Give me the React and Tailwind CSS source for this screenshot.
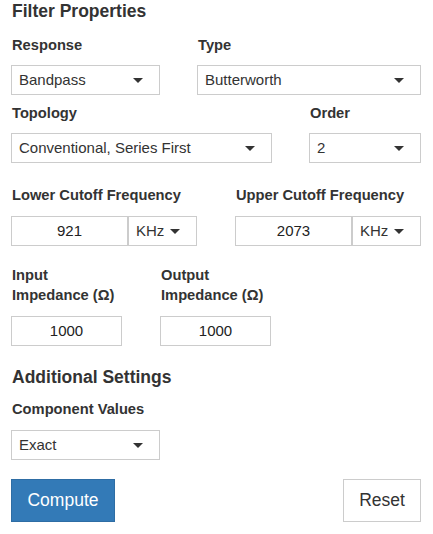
import React from "react";

const font = { fontFamily: '"Liberation Sans", Arial, Helvetica, sans-serif' };

function Caret() {
  return (
    <span className="inline-block w-0 h-0 border-l-[5px] border-r-[5px] border-t-[5px] border-l-transparent border-r-transparent border-t-[#333]" />
  );
}

function Select({ value, className }) {
  return (
    <div
      className={
        "h-[30px] border border-[#ccc] bg-white flex items-center justify-between pl-[7px] pr-[16px] text-[15px] text-[#333] " +
        className
      }
    >
      <span>{value}</span>
      <Caret />
    </div>
  );
}

function Label({ children, className = "" }) {
  return (
    <div className={"text-[14.7px] leading-[20px] font-bold text-[#333] " + className}>
      {children}
    </div>
  );
}

function FreqInput({ value }) {
  return (
    <div className="flex h-[30px]">
      <div className="w-[117px] h-full border border-[#ccc] flex items-center justify-center text-[15px] text-[#222]">
        {value}
      </div>
      <div className="w-[69px] h-full border border-[#ccc] flex items-center justify-between pl-[7px] pr-[16px] text-[15px] text-[#333]">
        <span>KHz</span>
        <Caret />
      </div>
    </div>
  );
}

function NumInput({ value }) {
  return (
    <div className="w-[111px] h-[30px] border border-[#ccc] flex items-center justify-center text-[15px] text-[#222]">
      {value}
    </div>
  );
}

export default function App() {
  return (
    <div className="w-[433px] h-[534px] bg-white pl-[11px] pr-[12px] overflow-hidden" style={font}>
      <div className="text-[17.5px] leading-[22px] font-bold text-[#333] pl-[1px]">Filter Properties</div>

      <div className="flex mt-[13px]">
        <div className="w-[149px]">
          <Label className="pl-[1px]">Response</Label>
          <Select value="Bandpass" className="mt-[10px]" />
        </div>
        <div className="w-[224px] ml-[37px]">
          <Label className="pl-[1px]">Type</Label>
          <Select value="Butterworth" className="mt-[10px]" />
        </div>
      </div>

      <div className="flex mt-[8px]">
        <div className="w-[261px]">
          <Label className="pl-[1px]">Topology</Label>
          <Select value="Conventional, Series First" className="mt-[10px]" />
        </div>
        <div className="w-[112px] ml-[37px]">
          <Label className="pl-[1px]">Order</Label>
          <Select value="2" className="mt-[10px]" />
        </div>
      </div>

      <div className="flex mt-[22px]">
        <div className="w-[186px]">
          <Label className="pl-[1px]">Lower Cutoff Frequency</Label>
          <div className="mt-[11px]">
            <FreqInput value="921" />
          </div>
        </div>
        <div className="w-[186px] ml-[38px]">
          <Label className="pl-[1px]">Upper Cutoff Frequency</Label>
          <div className="mt-[11px]">
            <FreqInput value="2073" />
          </div>
        </div>
      </div>

      <div className="flex mt-[19px]">
        <div className="w-[149px]">
          <Label className="pl-[1px]">
            Input
            <br />
            Impedance (Ω)
          </Label>
          <div className="mt-[11px]">
            <NumInput value="1000" />
          </div>
        </div>
        <div className="w-[149px]">
          <Label className="pl-[1px]">
            Output
            <br />
            Impedance (Ω)
          </Label>
          <div className="mt-[11px]">
            <NumInput value="1000" />
          </div>
        </div>
      </div>

      <div className="text-[17.5px] leading-[22px] font-bold text-[#333] mt-[20px] pl-[1px]">Additional Settings</div>
      <Label className="mt-[11px] pl-[1px]">Component Values</Label>
      <Select value="Exact" className="w-[149px] mt-[11px]" />

      <div className="flex justify-between mt-[19px]">
        <button className="w-[104px] h-[43px] bg-[#337ab7] border border-[#2e6da4] text-white text-[17.5px]">
          Compute
        </button>
        <button className="w-[78px] h-[43px] bg-white border border-[#ccc] text-[#333] text-[17.5px]">
          Reset
        </button>
      </div>
    </div>
  );
}
